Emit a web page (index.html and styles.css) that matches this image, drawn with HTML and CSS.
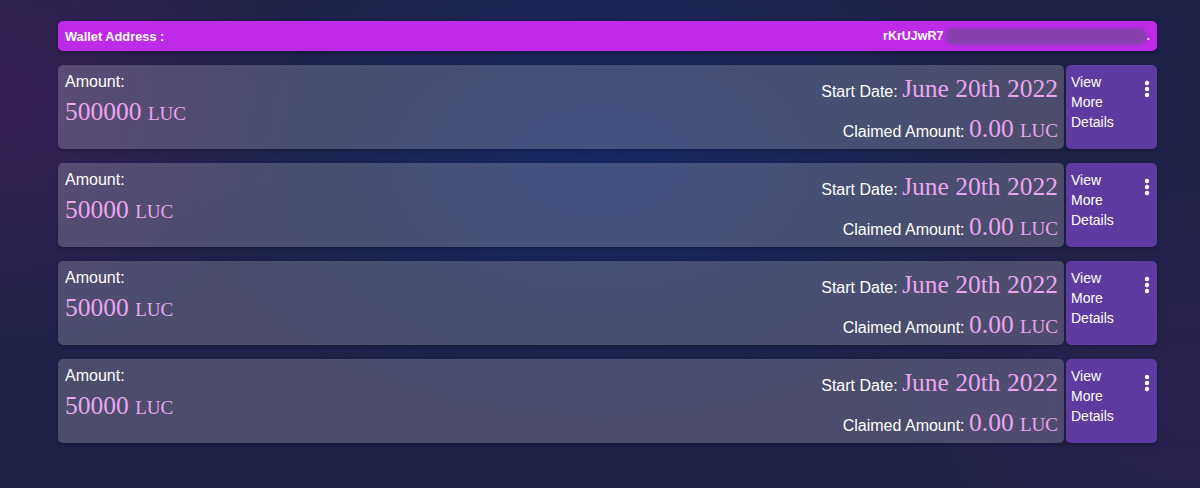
FILE: index.html
```html
<!DOCTYPE html>
<html lang="en">
<head>
    <meta charset="UTF-8">
    <meta name="viewport" content="width=device-width, initial-scale=1.0">
    <title>Staking - Locked Amounts</title>
    <link rel="stylesheet" href="styles.css">
</head>
<body>
    <div class="stake-list">
        <div class="wallet-bar">
            <span class="wallet-label">Wallet Address :</span>
            <span class="wallet-address">rKrUJwR7<span class="masked"></span>.</span>
        </div>

        <div class="stake-row">
            <div class="stake-card">
                <div class="stake-left">
                    <div class="label">Amount:</div>
                    <div class="value">500000 <span class="unit">LUC</span></div>
                </div>
                <div class="stake-right">
                    <div><span class="label">Start Date:</span> <span class="value">June 20th 2022</span></div>
                    <div><span class="label">Claimed Amount:</span> <span class="value">0.00 <span class="unit">LUC</span></span></div>
                </div>
            </div>
            <div class="details-btn">
                <span class="details-text">View More Details</span>
                <svg class="kebab" width="6" height="18" viewBox="0 0 6 18"><circle cx="3" cy="3" r="2.2" fill="#fff"/><circle cx="3" cy="9" r="2.2" fill="#fff"/><circle cx="3" cy="15" r="2.2" fill="#fff"/></svg>
            </div>
        </div>

        <div class="stake-row">
            <div class="stake-card">
                <div class="stake-left">
                    <div class="label">Amount:</div>
                    <div class="value">50000 <span class="unit">LUC</span></div>
                </div>
                <div class="stake-right">
                    <div><span class="label">Start Date:</span> <span class="value">June 20th 2022</span></div>
                    <div><span class="label">Claimed Amount:</span> <span class="value">0.00 <span class="unit">LUC</span></span></div>
                </div>
            </div>
            <div class="details-btn">
                <span class="details-text">View More Details</span>
                <svg class="kebab" width="6" height="18" viewBox="0 0 6 18"><circle cx="3" cy="3" r="2.2" fill="#fff"/><circle cx="3" cy="9" r="2.2" fill="#fff"/><circle cx="3" cy="15" r="2.2" fill="#fff"/></svg>
            </div>
        </div>

        <div class="stake-row">
            <div class="stake-card">
                <div class="stake-left">
                    <div class="label">Amount:</div>
                    <div class="value">50000 <span class="unit">LUC</span></div>
                </div>
                <div class="stake-right">
                    <div><span class="label">Start Date:</span> <span class="value">June 20th 2022</span></div>
                    <div><span class="label">Claimed Amount:</span> <span class="value">0.00 <span class="unit">LUC</span></span></div>
                </div>
            </div>
            <div class="details-btn">
                <span class="details-text">View More Details</span>
                <svg class="kebab" width="6" height="18" viewBox="0 0 6 18"><circle cx="3" cy="3" r="2.2" fill="#fff"/><circle cx="3" cy="9" r="2.2" fill="#fff"/><circle cx="3" cy="15" r="2.2" fill="#fff"/></svg>
            </div>
        </div>

        <div class="stake-row">
            <div class="stake-card">
                <div class="stake-left">
                    <div class="label">Amount:</div>
                    <div class="value">50000 <span class="unit">LUC</span></div>
                </div>
                <div class="stake-right">
                    <div><span class="label">Start Date:</span> <span class="value">June 20th 2022</span></div>
                    <div><span class="label">Claimed Amount:</span> <span class="value">0.00 <span class="unit">LUC</span></span></div>
                </div>
            </div>
            <div class="details-btn">
                <span class="details-text">View More Details</span>
                <svg class="kebab" width="6" height="18" viewBox="0 0 6 18"><circle cx="3" cy="3" r="2.2" fill="#fff"/><circle cx="3" cy="9" r="2.2" fill="#fff"/><circle cx="3" cy="15" r="2.2" fill="#fff"/></svg>
            </div>
        </div>
    </div>
</body>
</html>
```

FILE: styles.css
```css
html, body {
    height: 100%;
}
body {
    margin: 0;
    font-family: "Liberation Sans", Arial, sans-serif;
    color: #fff;
    background-color: #1e2147;
    background-image:
        radial-gradient(ellipse 420px 260px at 50% 33%, rgba(20, 40, 105, 0.85), transparent 100%),
        radial-gradient(ellipse 300px 260px at 0% 20%, rgba(70, 30, 95, 0.6), transparent 100%),
        radial-gradient(ellipse 320px 240px at 100% 80%, rgba(55, 30, 90, 0.45), transparent 100%);
    overflow: hidden;
}
.stake-list {
    width: 1099px;
    padding: 21px 0 0 58px;
    display: flex;
    flex-direction: column;
    gap: 14px;
}
.wallet-bar {
    height: 30px;
    padding: 0 7px;
    display: flex;
    align-items: center;
    justify-content: space-between;
    background-color: #bf29e8;
    border-radius: 5px;
    font-size: 12.5px;
    font-weight: bold;
    box-shadow: 0 2px 4px rgba(0,0,0,0.25);
}
.wallet-label {
    font-size: 12.8px;
}
.wallet-address {
    display: flex;
    align-items: center;
}
.masked {
    display: inline-block;
    width: 202px;
    height: 17px;
    margin-left: 1px;
    border-radius: 9px;
    background-color: #8640ae;
    filter: blur(1.5px);
}
.stake-row {
    display: flex;
    gap: 2px;
    height: 84px;
}
.stake-card {
    flex: 1;
    display: flex;
    justify-content: space-between;
    padding: 5px 6px 0 7px;
    background-color: rgba(255,255,255,0.2);
    border-radius: 5px;
    box-shadow: 0 2px 4px rgba(0,0,0,0.2);
}
.label {
    font-size: 16px;
    line-height: 24px;
}
.value {
    font-family: "Liberation Serif", "Times New Roman", serif;
    font-size: 25.5px;
    line-height: 1.5;
    color: #eaa6ef;
}
.value .unit {
    font-size: 19px;
}
.stake-left .value {
    margin-top: -1px;
}
.stake-right {
    text-align: right;
}
.stake-right > div {
    line-height: 36px;
}
.stake-right .label {
    line-height: normal;
}
.details-btn {
    width: 91px;
    box-sizing: border-box;
    display: flex;
    justify-content: space-between;
    align-items: flex-start;
    padding: 7px 7px 0 5px;
    background-color: #5d3ba0;
    border-radius: 5px;
    box-shadow: 0 2px 4px rgba(0,0,0,0.2);
    font-size: 14px;
    line-height: 20px;
}
.details-text {
    width: 50px;
}
.kebab {
    margin-top: 8px;
}
```
